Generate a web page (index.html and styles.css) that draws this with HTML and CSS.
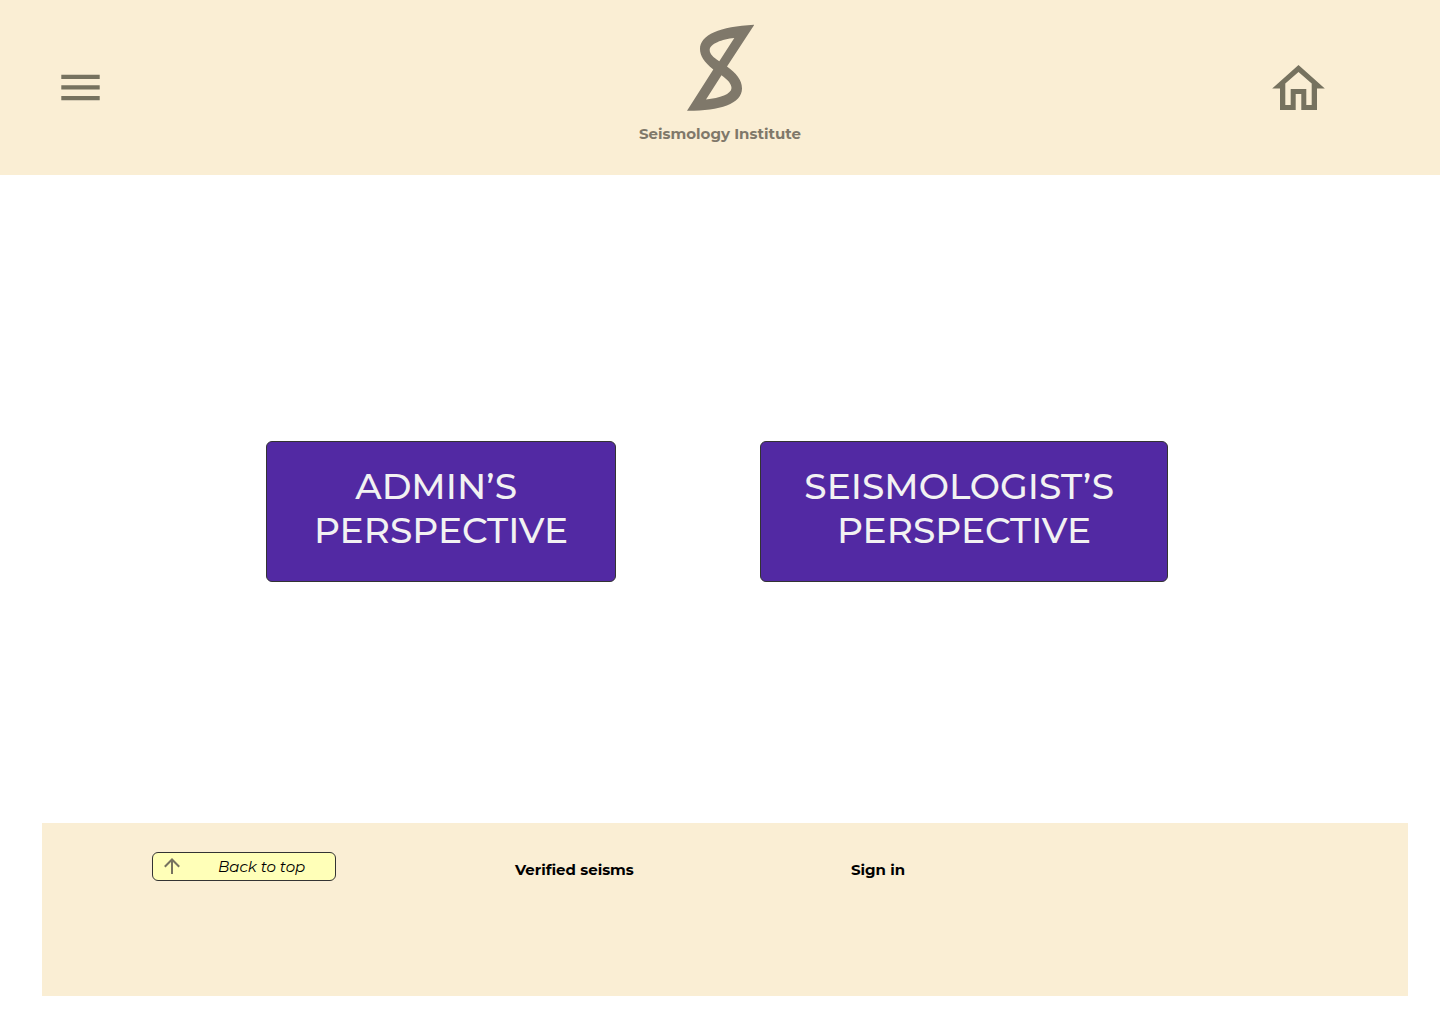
FILE: index.html
```html
<!DOCTYPE html>
<html lang="en">
<head>
  <meta charset="utf-8">
  <meta name="viewport" content="width=device-width, initial-scale=1">
  <title>Seismology Institute</title>
  <link rel="stylesheet" href="styles.css">
</head>
<body>
  <header class="site-header" id="top">
    <button class="icon-button" type="button" aria-label="Menu">
      <svg width="40" height="28" viewBox="0 0 40 28" fill="#76725f" aria-hidden="true">
        <path d="M1.300 .700h38.400v4.300H1.300zM1.300 11.300h38.400v4.300H1.300zM1.300 22h38.400v4.300H1.300z"/>
      </svg>
    </button>
    <a class="brand" href="#top">
      <svg width="68" height="88" viewBox="16 9 68 88" fill="#7f786a" fill-rule="evenodd" aria-hidden="true">
        <path d="M84.300 9.800L57 51.600C66 58 72 65 72 73.500C72 89 49 96 17 95.800L43.300 54.500C34 47 30 41 30 34C30 20 50 11.500 84.300 9.800ZM64.300 23C52 24 39.700 29 39.700 35C39.700 39 43 42 49.300 46.300ZM51.500 60.300L36 84.500C50 83 61.500 79 61.500 73C61.500 69 58 65 51.500 60.300Z"/>
      </svg>
      <span class="brand-name">Seismology Institute</span>
    </a>
    <a class="home-link" href="#top" aria-label="Home">
      <svg width="53" height="46" viewBox="12 10 53 46" fill="#76725f" fill-rule="evenodd" aria-hidden="true">
        <path d="M38.500 10L64.800 33.500H57V55H41.300V39H35.700V55H20V33.500H12.200ZM25.300 50H30.700V34H46.300V50H51.700V28.500L38.500 17L25.300 28.500Z"/>
      </svg>
    </a>
  </header>

  <main class="choices">
    <button class="choice choice-admin" type="button">ADMIN’S&nbsp;<br>PERSPECTIVE</button>
    <button class="choice choice-seismologist" type="button">SEISMOLOGIST’S&nbsp;<br>PERSPECTIVE</button>
  </main>

  <footer class="site-footer">
    <a class="back-to-top" href="#top">
      <svg width="16" height="18" viewBox="0 0 16 18" fill="none" stroke="#76725f" stroke-width="2" aria-hidden="true">
        <path d="M8 16V1.500M.800 8.700L8 1.500L15.200 8.700"/>
      </svg>
      <span class="back-label">Back to top</span>
    </a>
    <a class="footer-link" href="#verified">Verified seisms</a>
    <a class="footer-link" href="#signin">Sign in</a>
  </footer>
</body>
</html>
```

FILE: styles.css
```css
* {
  box-sizing: border-box;
}

body {
  display: flex;
  flex-direction: column;
  min-height: 100vh;
  margin: 0;
  background: #fff;
  color: #000;
  font-family: Montserrat, Inter, sans-serif;
}

a {
  color: inherit;
  text-decoration: none;
}

svg {
  display: block;
}

.site-header {
  display: grid;
  grid-template-columns: 1fr auto 1fr;
  align-items: center;
  padding: 24px 60px 31px;
  background: #faeed4;
}

.icon-button {
  justify-self: start;
  margin: 0;
  padding: 8px 0 0;
  border: 0;
  background: none;
  cursor: pointer;
}

.brand {
  display: flex;
  flex-direction: column;
  align-items: center;
  gap: 12px;
  color: #7f786a;
}

.brand-name {
  font-size: 15px;
  line-height: 20px;
  font-weight: 700;
}

.home-link {
  justify-self: end;
  padding-top: 8px;
  margin-right: 55px;
}

.choices {
  display: flex;
  flex: 1;
  justify-content: center;
  align-items: center;
  gap: 144px;
  padding: 48px 24px 24px 18px;
}

.choice {
  padding: 22px 16px 29px;
  border: 1px solid #333;
  border-radius: 6px;
  background: #5229a3;
  color: #f2f2f2;
  font: inherit;
  font-size: 36px;
  line-height: 44px;
  font-weight: 500;
  cursor: pointer;
}

.choice-admin {
  width: 350px;
}

.choice-seismologist {
  width: 408px;
}

.site-footer {
  display: grid;
  grid-template-columns: 363px 336px 1fr;
  align-items: start;
  min-height: 173px;
  margin: 0 32px 28px 42px;
  padding: 29px 110px;
  background: #faeed4;
}

.back-to-top {
  display: flex;
  align-items: center;
  width: 184px;
  height: 29px;
  padding: 0 11px;
  border: 1px solid #333;
  border-radius: 6px;
  background: #ffffb8;
}

.back-label {
  flex: 1;
  padding-left: 38px;
  font-size: 15px;
  line-height: 20px;
  font-style: italic;
}

.footer-link {
  padding-top: 8px;
  font-size: 15px;
  line-height: 20px;
  font-weight: 700;
}
```
